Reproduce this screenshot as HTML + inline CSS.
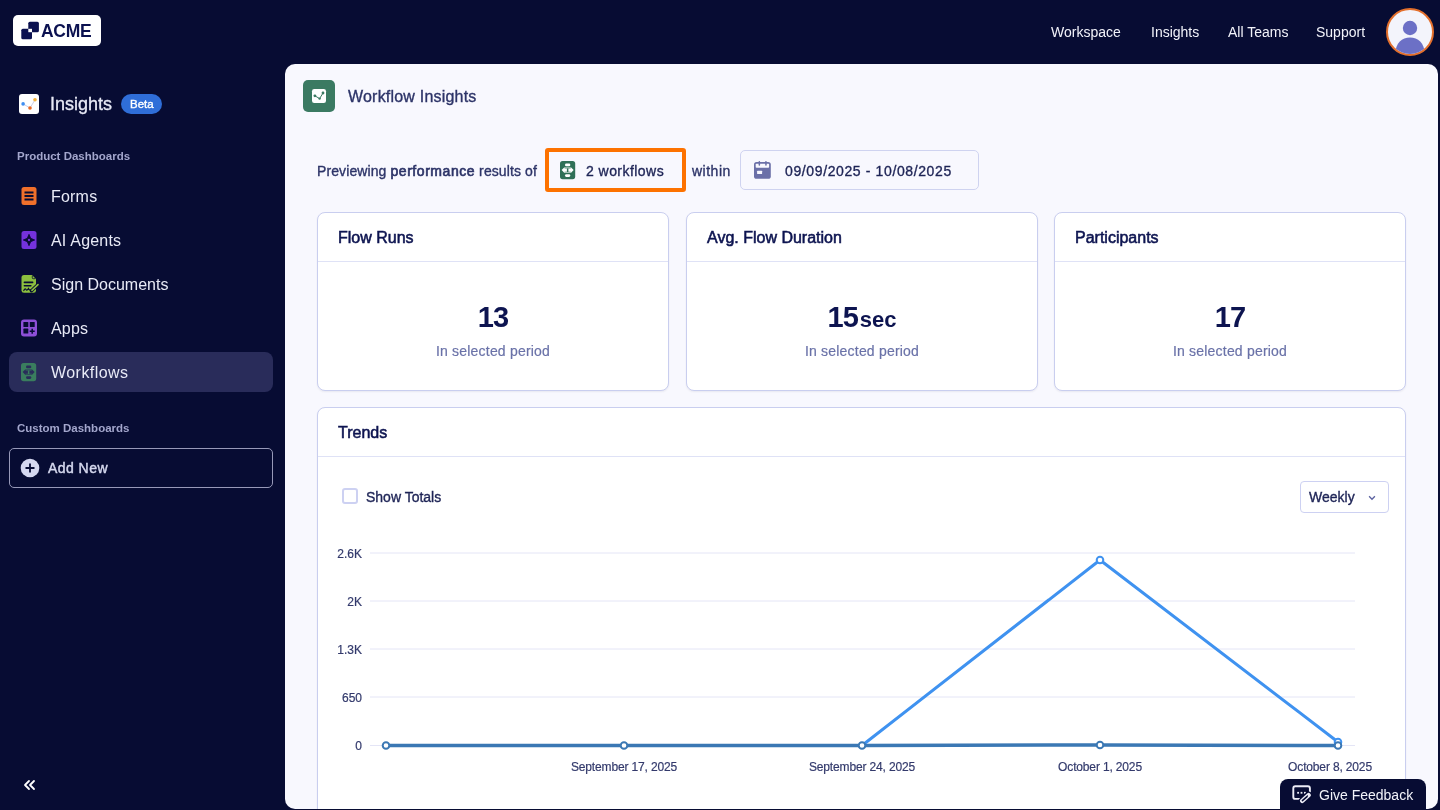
<!DOCTYPE html>
<html><head><meta charset="utf-8">
<style>
*{box-sizing:border-box;margin:0;padding:0}
html,body{width:1440px;height:810px;overflow:hidden}
body{background:#070c33;font-family:"Liberation Sans",sans-serif;position:relative;color:#fff}
.abs{position:absolute}
.t{position:absolute;white-space:nowrap;line-height:1;will-change:transform}
/* header */
.logo{left:13px;top:15px;width:88px;height:31px;background:#fff;border-radius:5px}
.nav{font-size:14px;color:#f2f3fa;top:25.4px!important}
.avatar{left:1386px;top:8px;width:48px;height:48px;border-radius:50%;border:2px solid #e36f2c;background:#f3f4fb;overflow:hidden}
/* sidebar */
.side-h{font-size:11.5px;font-weight:bold;color:#a3a6cc}
.item{font-size:16px;color:#e8eaf6;letter-spacing:0.2px}
.sel{left:9px;top:352px;width:264px;height:40px;background:#292c5a;border-radius:8px}
.addnew{left:9px;top:448px;width:264px;height:40px;border:1px solid #9799b8;border-radius:5px}
/* panel */
.panel{left:285px;top:64px;width:1153px;height:745px;background:#f8f8fe;border-radius:10px;overflow:hidden}
.card{position:absolute;background:#fff;border:1px solid #c9ceef;border-radius:8px;box-shadow:0 1px 2px rgba(30,30,70,0.07)}
.card .hd{position:absolute;left:0;top:0;right:0;height:49px;border-bottom:1px solid #dfe2f6}
.ctitle{font-size:16px;color:#0d1450;-webkit-text-stroke:0.55px #0d1450}
.med{-webkit-text-stroke:0.35px currentColor}
.big{font-size:29px;font-weight:bold;color:#0d1450}
.sub{font-size:14px;color:#6a72a8;-webkit-text-stroke:0.2px #6a72a8}
.dark{color:#2d3468}
.ylab{font-size:12px;color:#3a4070;text-align:right}
.xlab{font-size:12px;color:#3a4070}
</style></head>
<body>

<!-- LOGO -->
<div class="abs logo">
  <svg class="abs" style="left:0;top:0" width="88" height="31" viewBox="0 0 88 31">
    <rect x="8.3" y="13.8" width="10.7" height="10.4" rx="1.5" fill="#0b1150"/>
    <rect x="15.3" y="6.8" width="10.6" height="10.4" rx="1.5" fill="#0b1150"/>
    <rect x="15.3" y="13.8" width="3.7" height="3.4" fill="#fff"/>
  </svg>
  <div class="t" style="left:28px;top:8px;font-size:17.5px;font-weight:bold;color:#0b1150;letter-spacing:-0.3px">ACME</div>
</div>

<!-- NAV -->
<div class="t nav" style="left:1051px;top:24px">Workspace</div>
<div class="t nav" style="left:1151px;top:24px">Insights</div>
<div class="t nav" style="left:1228px;top:24px">All Teams</div>
<div class="t nav" style="left:1316px;top:24px">Support</div>
<div class="abs avatar">
  <svg width="44" height="44" viewBox="0 0 44 44" style="position:absolute;left:0;top:0">
    <circle cx="22" cy="18" r="7.2" fill="#6c70c6"/>
    <path d="M7 46 C7 33.5 13.5 27.6 22 27.6 C30.5 27.6 37 33.5 37 46 Z" fill="#6c70c6"/>
  </svg>
</div>

<!-- SIDEBAR -->
<div class="abs" style="left:19px;top:94px;width:20px;height:20px;background:#fff;border-radius:3px">
  <svg width="20" height="20" viewBox="0 0 20 20">
    <path d="M4.1 9.9 L11 14 L16 5.8" stroke="#c5c8e4" stroke-width="0.9" fill="none"/>
    <circle cx="4.1" cy="9.9" r="1.8" fill="#3f8ff2"/>
    <circle cx="11" cy="14" r="1.8" fill="#ea6a25"/>
    <circle cx="16" cy="5.8" r="1.8" fill="#f2b13a"/>
  </svg>
</div>
<div class="t item" style="left:50px;top:95px;font-size:18px;letter-spacing:0;-webkit-text-stroke:0.3px #e8eaf6">Insights</div>
<div class="abs" style="left:121px;top:94px;width:41px;height:20px;background:#2f6ed8;border-radius:10px"></div>
<div class="t" style="left:130px;top:99px;font-size:11.5px;color:#fff;-webkit-text-stroke:0.35px #fff">Beta</div>

<div class="t side-h" style="left:17px;top:151px">Product Dashboards</div>

<div class="abs sel"></div>
<!-- icons -->
<svg class="abs" style="left:21px;top:187px" width="16" height="18" viewBox="0 0 16 18">
  <rect x="0.5" y="0" width="15" height="18" rx="2.5" fill="#f0702b"/>
  <rect x="3.5" y="4.5" width="9" height="2" fill="#070c33"/>
  <rect x="3.5" y="8" width="9" height="2" fill="#070c33"/>
  <rect x="3.5" y="11.5" width="9" height="2" fill="#070c33"/>
</svg>
<div class="t item" style="left:51px;top:189px">Forms</div>

<svg class="abs" style="left:21px;top:231px" width="16" height="18" viewBox="0 0 16 18">
  <rect x="0.5" y="0" width="15" height="18" rx="2.5" fill="#7432dc"/>
  <path d="M8 3.3 L9.7 7.3 L13.7 9 L9.7 10.7 L8 14.7 L6.3 10.7 L2.3 9 L6.3 7.3Z" fill="#070c33" stroke="#070c33" stroke-width="0.8" stroke-linejoin="round"/>
  <circle cx="8" cy="9" r="1.15" fill="#7432dc"/>
</svg>
<div class="t item" style="left:51px;top:233px">AI Agents</div>

<svg class="abs" style="left:21px;top:275px" width="19" height="19" viewBox="0 0 19 19">
  <path d="M0.5 2.5 Q0.5 0 3 0 L11 0 L15 4 L15 15.5 Q15 17.8 12.5 17.8 L3 17.8 Q0.5 17.8 0.5 15.5Z" fill="#8cbf3f"/>
  <path d="M11.3 0.6 L11.3 2.8 Q11.3 3.7 12.2 3.7 L14.4 3.7" stroke="#070c33" stroke-width="0.8" fill="none"/>
  <rect x="2.6" y="6.5" width="9.8" height="1.7" rx="0.8" fill="#070c33"/>
  <rect x="2.6" y="10" width="8" height="1.4" rx="0.7" fill="#070c33"/>
  <path d="M2.8 15.5 Q4 13 5 14.5 Q6 16 7.5 13.5 Q8.3 15.5 9.5 14.8" stroke="#070c33" stroke-width="1.2" fill="none" stroke-linecap="round"/>
  <path d="M10.5 15.8 L17.3 9.3" stroke="#070c33" stroke-width="3.4" stroke-linecap="round"/>
  <path d="M10.9 15.3 L17 9.6" stroke="#8cbf3f" stroke-width="1.6" stroke-linecap="round"/>
</svg>
<div class="t item" style="left:51px;top:277px;letter-spacing:0">Sign Documents</div>

<svg class="abs" style="left:21px;top:319px" width="17" height="18" viewBox="0 0 17 18">
  <rect x="0" y="0.5" width="16" height="17" rx="3" fill="#8e4fd8"/>
  <rect x="2.4" y="3" width="4.9" height="5" rx="0.6" fill="#070c33"/>
  <rect x="8.8" y="3" width="4.9" height="5" rx="0.6" fill="#070c33"/>
  <rect x="2.4" y="9.6" width="4.9" height="5" rx="0.6" fill="#070c33"/>
  <path d="M11.2 9.8 V14.8 M8.7 12.3 H13.7" stroke="#070c33" stroke-width="1.5"/>
</svg>
<div class="t item" style="left:51px;top:321px">Apps</div>

<svg class="abs" style="left:21.4px;top:362.8px" width="16" height="19" viewBox="0 0 16 19">
  <rect x="0" y="0" width="15.2" height="18.2" rx="2.6" fill="#3a7d5e"/>
  <rect x="5" y="2.6" width="5.3" height="2.6" rx="1.3" fill="#292c5a"/>
  <path d="M1.6 9.1 L4.2 6.5 L11.1 6.5 L13.6 9.1 L11.1 11.8 L4.2 11.8Z" fill="#292c5a"/>
  <rect x="6.9" y="7.4" width="1.5" height="3.6" fill="#3a7d5e"/>
  <path d="M4.6 7.3 H10.7 M4.6 11 H10.7" stroke="#3a7d5e" stroke-width="0.5"/>
  <rect x="5" y="13.3" width="5.3" height="2.6" rx="1.3" fill="#292c5a"/>
</svg>
<div class="t item" style="left:51px;top:365px;letter-spacing:0.45px">Workflows</div>

<div class="t side-h" style="left:17px;top:423px">Custom Dashboards</div>
<div class="abs addnew"></div>
<svg class="abs" style="left:20px;top:458px" width="20" height="20" viewBox="0 0 20 20">
  <circle cx="10" cy="10" r="9.3" fill="#d5d8f0"/>
  <path d="M10 5.5 V14.5 M5.5 10 H14.5" stroke="#070c33" stroke-width="1.8"/>
</svg>
<div class="t" style="left:48px;top:461px;font-size:14px;color:#d5d8ee;-webkit-text-stroke:0.45px #d5d8ee;letter-spacing:0.45px">Add New</div>

<svg class="abs" style="left:22px;top:779px" width="14" height="12" viewBox="0 0 14 12">
  <path d="M7 2 L3 6 L7 10 M12 2 L8 6 L12 10" stroke="#fff" stroke-width="1.8" fill="none" stroke-linecap="round" stroke-linejoin="round"/>
</svg>

<!-- PANEL -->
<div class="abs panel" id="panel">
  <!-- title -->
  <div class="abs" style="left:18px;top:16px;width:32px;height:32px;background:#3b7a62;border-radius:5px">
    <svg width="32" height="32" viewBox="0 0 32 32">
      <rect x="9" y="9" width="14" height="14" rx="2.2" fill="#fff"/>
      <path d="M11.9 15.8 L16.6 18.6 L20 13" stroke="#3b7a62" stroke-width="1" fill="none" stroke-linejoin="round"/>
      <circle cx="11.9" cy="15.8" r="1.4" fill="#3b7a62"/>
      <circle cx="16.6" cy="18.6" r="1.2" fill="#3b7a62"/>
      <circle cx="20" cy="13" r="1.4" fill="#3b7a62"/>
    </svg>
  </div>
  <div class="t dark med" style="left:63px;top:25px;font-size:16px;letter-spacing:0.2px">Workflow Insights</div>

  <!-- filter row -->
  <div class="t dark med" style="left:32px;top:100px;font-size:14px;letter-spacing:0.1px">Previewing <span style="-webkit-text-stroke:0.65px #2d3468;letter-spacing:0.55px">performance</span> results of</div>
  <div class="abs" style="left:260px;top:83.5px;width:141px;height:44px;border:4px solid #fd7200;border-radius:3px"></div>
  <svg class="abs" style="left:275.4px;top:96.8px" width="16" height="19" viewBox="0 0 16 19">
  <rect x="0" y="0" width="15.2" height="18.2" rx="2.6" fill="#2f7057"/>
  <rect x="5" y="2.6" width="5.3" height="2.6" rx="1.3" fill="#fff"/>
  <path d="M1.6 9.1 L4.2 6.5 L11.1 6.5 L13.6 9.1 L11.1 11.8 L4.2 11.8Z" fill="#fff"/>
  <rect x="6.9" y="7.4" width="1.5" height="3.6" fill="#2f7057"/>
  <path d="M4.6 7.3 H10.7 M4.6 11 H10.7" stroke="#2f7057" stroke-width="0.5"/>
  <rect x="5" y="13.3" width="5.3" height="2.6" rx="1.3" fill="#fff"/>
</svg>
  <div class="t med" style="left:301px;top:100px;font-size:14px;color:#1e2456;letter-spacing:0.45px">2 workflows</div>
  <div class="t dark med" style="left:407px;top:100px;font-size:14px;letter-spacing:0.5px">within</div>
  <div class="abs" style="left:455px;top:86px;width:239px;height:40px;border:1px solid #cfd3f0;border-radius:5px;background:#f8f8fe"></div>
  <svg class="abs" style="left:469px;top:97px" width="17" height="18" viewBox="0 0 17 18">
    <rect x="0" y="1" width="16.8" height="16.8" rx="2.6" fill="#6b70a8"/>
    <rect x="1.7" y="2.8" width="13.4" height="4" rx="0.8" fill="#f8f8fe"/>
    <rect x="4.6" y="0" width="1.5" height="4.8" rx="0.7" fill="#6b70a8"/>
    <rect x="11.2" y="0" width="1.5" height="4.8" rx="0.7" fill="#6b70a8"/>
    <rect x="3.1" y="9.7" width="5" height="3.4" rx="0.5" fill="#f8f8fe"/>
  </svg>
  <div class="t med" style="left:500px;top:100px;font-size:14px;color:#1e2456;letter-spacing:0.62px">09/09/2025 - 10/08/2025</div>

  <!-- cards -->
  <div class="card" style="left:32px;top:148px;width:352px;height:179px">
    <div class="hd"></div>
    <div class="t ctitle" style="left:20px;top:17px">Flow Runs</div>
    <div class="t big" style="left:0;right:0;text-align:center;top:90px;letter-spacing:-1px">13</div>
    <div class="t sub" style="left:0;right:0;text-align:center;top:131px;letter-spacing:0.2px">In selected period</div>
  </div>
  <div class="card" style="left:401px;top:148px;width:352px;height:179px">
    <div class="hd"></div>
    <div class="t ctitle" style="left:20px;top:17px">Avg. Flow Duration</div>
    <div class="t big" style="left:0;right:0;text-align:center;top:90px"><span style="letter-spacing:-1px">15</span><span style="font-size:22px;margin-left:2px">sec</span></div>
    <div class="t sub" style="left:0;right:0;text-align:center;top:131px;letter-spacing:0.2px">In selected period</div>
  </div>
  <div class="card" style="left:769px;top:148px;width:352px;height:179px">
    <div class="hd"></div>
    <div class="t ctitle" style="left:20px;top:17px">Participants</div>
    <div class="t big" style="left:0;right:0;text-align:center;top:90px;letter-spacing:-1px">17</div>
    <div class="t sub" style="left:0;right:0;text-align:center;top:131px;letter-spacing:0.2px">In selected period</div>
  </div>

  <!-- trends -->
  <div class="card" style="left:32px;top:343px;width:1089px;height:460px">
    <div class="hd"></div>
    <div class="t ctitle" style="left:20px;top:17px">Trends</div>
  </div>
  <div class="abs" style="left:57px;top:424px;width:16px;height:16px;border:2px solid #cdd1f2;border-radius:3px"></div>
  <div class="t med" style="left:81px;top:426px;font-size:14px;color:#1e2456">Show Totals</div>
  <div class="abs" style="left:1015px;top:417px;width:89px;height:32px;border:1px solid #cdd1f2;border-radius:4px;background:#fff"></div>
  <div class="t med" style="left:1024px;top:426px;font-size:14px;color:#1e2456">Weekly</div>
  <svg class="abs" style="left:1082px;top:430px" width="10" height="8" viewBox="0 0 10 8">
    <path d="M2.1 2.2 L5 5.2 L7.9 2.2" stroke="#5c62a0" stroke-width="1.3" fill="none"/>
  </svg>

  <svg class="abs" style="left:0;top:0" width="1152" height="744" viewBox="285 64 1152 744">
    <g stroke="#e4e5f6" stroke-width="1">
      <line x1="370" y1="553" x2="1355" y2="553"/>
      <line x1="370" y1="601" x2="1355" y2="601"/>
      <line x1="370" y1="649" x2="1355" y2="649"/>
      <line x1="370" y1="697" x2="1355" y2="697"/>
      <line x1="370" y1="745.5" x2="1355" y2="745.5"/>
    </g>
    <g font-family="Liberation Sans" font-size="12" fill="#333a6c" stroke="#333a6c" stroke-width="0.2" text-anchor="end">
      <text x="362" y="558">2.6K</text>
      <text x="362" y="606">2K</text>
      <text x="362" y="654">1.3K</text>
      <text x="362" y="702">650</text>
      <text x="362" y="750">0</text>
    </g>
    <g font-family="Liberation Sans" font-size="12" fill="#333a6c" stroke="#333a6c" stroke-width="0.2" text-anchor="middle" letter-spacing="-0.15">
      <text x="624" y="771">September 17, 2025</text>
      <text x="862" y="771">September 24, 2025</text>
      <text x="1100" y="771">October 1, 2025</text>
      <text x="1330" y="771">October 8, 2025</text>
    </g>
    <polyline points="386,745.5 624,745.5 862,745.5 1100,745 1338,745.5" stroke="#3b78b4" stroke-width="3.5" fill="none"/>
    <polyline points="862,745.5 1100,560 1338,742" stroke="#3f92f0" stroke-width="3" fill="none" stroke-linejoin="round"/>
    <g fill="#fff" stroke="#3b78b4" stroke-width="2">
      <circle cx="386" cy="745.5" r="3.3"/>
      <circle cx="624" cy="745.5" r="3.3"/>
      <circle cx="862" cy="745.5" r="3.3"/>
      <circle cx="1100" cy="745" r="3.3"/>
    </g>
    <g fill="#fff" stroke="#3f92f0" stroke-width="2">
      <circle cx="1100" cy="560" r="3.3"/>
      <circle cx="1338" cy="742" r="3.3"/>
    </g>
    <circle cx="1338" cy="745.5" r="3.3" fill="#fff" stroke="#3b78b4" stroke-width="2"/>
  </svg>
</div>

<!-- feedback -->
<div class="abs" style="left:1280px;top:779px;width:146px;height:40px;background:#070c33;border-radius:8px"></div>
<svg class="abs" style="left:1288px;top:782px" width="28" height="24" viewBox="0 0 28 24">
  <path d="M12.7 16.9 H7.3 Q5.3 16.9 5.3 14.9 V6.3 Q5.3 4.3 7.3 4.3 H19.9 Q21.9 4.3 21.9 6.3 V10.4" stroke="#ececf6" stroke-width="1.9" fill="none"/>
  <rect x="9.2" y="9.9" width="1.8" height="1.8" fill="#ececf6"/>
  <rect x="12.6" y="9.9" width="1.8" height="1.8" fill="#ececf6"/>
  <rect x="16" y="9.9" width="1.8" height="1.8" fill="#ececf6"/>
  <path d="M14.2 18.8 L20.6 13.2" stroke="#070c33" stroke-width="7" stroke-linecap="round"/>
  <path d="M14.2 18.8 L20.6 13.2" stroke="#ececf6" stroke-width="4.4" stroke-linecap="round"/>
  <path d="M14.4 18.6 L19 14.6" stroke="#070c33" stroke-width="1.5" stroke-linecap="round"/>
  <circle cx="19.5" cy="13.8" r="0.6" fill="#070c33"/>
</svg>
<div class="t" style="left:1319px;top:788px;font-size:14px;color:#f2f3fa">Give Feedback</div>


</body></html>
